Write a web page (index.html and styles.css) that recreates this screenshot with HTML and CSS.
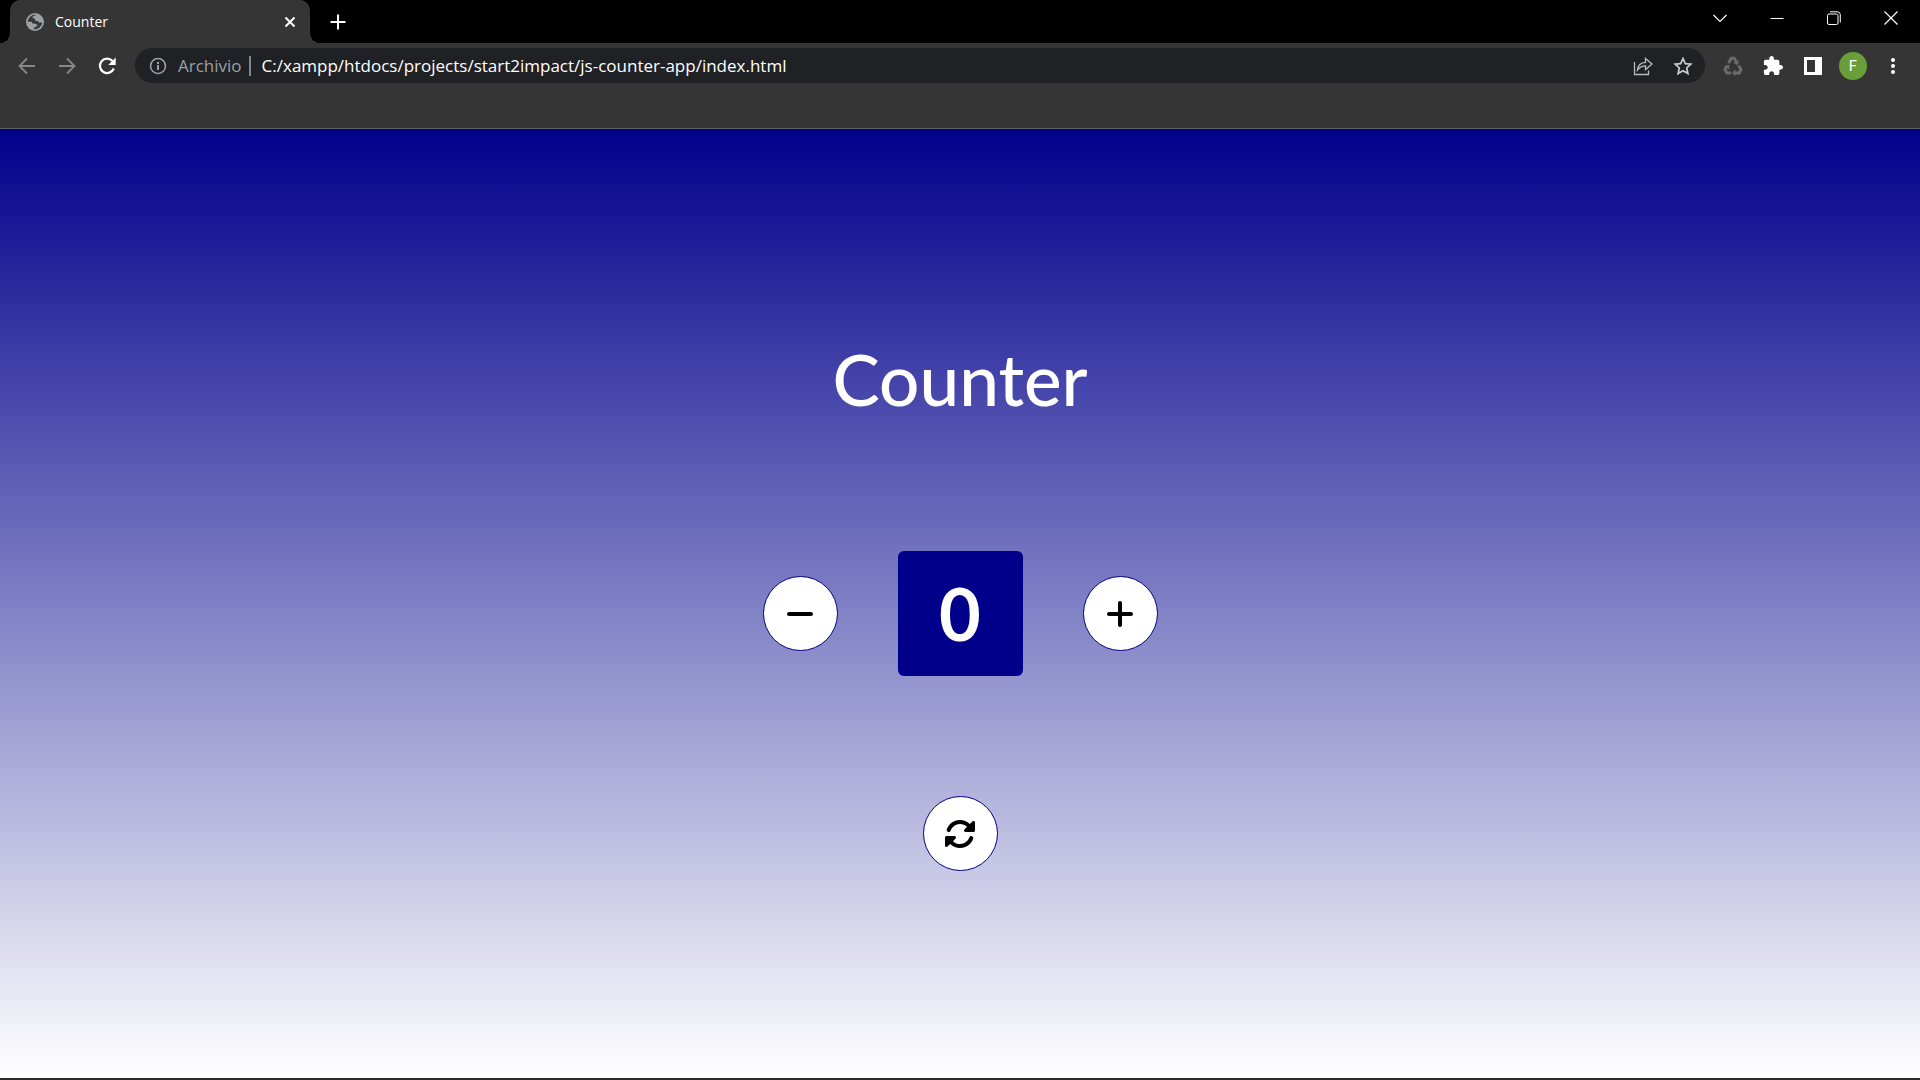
FILE: index.html
```html
<!DOCTYPE html>
<html lang="it">
<head>
<meta charset="utf-8">
<meta name="viewport" content="width=device-width, initial-scale=1">
<title>Counter</title>
<link rel="stylesheet" href="styles.css">
</head>
<body>
<header class="browser">
  <div class="tab-strip">
    <div class="tab">
      <svg class="icon-18" viewBox="0 0 18 18" aria-hidden="true"><circle cx="9" cy="9" r="9" fill="#9aa0a6"/><path d="M11 2C8.500 2.200 6 3.300 6.600 5.200L9 5.600 9.200 7.800 12.300 8.200 13 9.800 16.200 9.500A7.300 7.300 0 0 1 8 16.200L8.500 14 10.800 13.500 11.500 12 9.500 10.700 6.500 10.500 5.800 8.800 1.800 8.800A7.300 7.300 0 0 1 11 2Z" fill="#35363a"/></svg>
      <span class="tab-title">Counter</span>
      <button class="tab-close" aria-label="Chiudi scheda"><svg class="icon-12" viewBox="0 0 12 12" aria-hidden="true"><path d="M1.500 1.500 10.500 10.500M10.500 1.500 1.500 10.500" stroke="#fff" stroke-width="2"/></svg></button>
    </div>
    <button class="new-tab" aria-label="Nuova scheda"><svg class="icon-16" viewBox="0 0 16 16" aria-hidden="true"><path d="M8 .5V15.500M.5 8H15.500" stroke="#fff" stroke-width="2"/></svg></button>
    <div class="window-controls">
      <button class="window-button" aria-label="Cerca schede"><svg class="icon-14" viewBox="0 0 14 14" aria-hidden="true"><path d="M.5 4 7 10.500 13.500 4" fill="none" stroke="#fff" stroke-width="1.200"/></svg></button>
      <button class="window-button" aria-label="Riduci a icona"><svg class="icon-14" viewBox="0 0 14 14" aria-hidden="true"><path d="M.5 7.500H13.500" stroke="#fff"/></svg></button>
      <button class="window-button" aria-label="Ripristina"><svg class="icon-14" viewBox="0 0 14 14" aria-hidden="true"><rect x=".5" y="3" width="10.500" height="10.500" rx="1.500" fill="none" stroke="#fff"/><path d="M3 .8H10.500A3 3 0 0 1 13.300 3.600V11.500" fill="none" stroke="#fff"/></svg></button>
      <button class="window-button" aria-label="Chiudi"><svg class="icon-14" viewBox="0 0 14 14" aria-hidden="true"><path d="M.5 .5 13.500 13.500M13.500 .5 .5 13.500" stroke="#fff" stroke-width="1.200"/></svg></button>
    </div>
  </div>
  <div class="toolbar">
    <div class="tools">
      <button class="tool" aria-label="Indietro"><svg class="icon-18" viewBox="0 0 18 18" aria-hidden="true"><path d="M17 9H2M9 1.500 1.500 9 9 16.500" fill="none" stroke="#888" stroke-width="1.800"/></svg></button>
      <button class="tool" aria-label="Avanti"><svg class="icon-18" viewBox="0 0 18 18" aria-hidden="true"><path d="M1 9H16M9 1.500 16.500 9 9 16.500" fill="none" stroke="#888" stroke-width="1.800"/></svg></button>
      <button class="tool" aria-label="Ricarica"><svg class="icon-18" viewBox="0 0 18 18" aria-hidden="true"><path d="M15.800 11.500A7.200 7.200 0 1 1 14.500 4" fill="none" stroke="#fff" stroke-width="2.200"/><path d="M17.700 .5V8H10.200Z" fill="#fff"/></svg></button>
    </div>
    <form class="omnibox">
      <svg class="icon-18" viewBox="0 0 18 18" aria-hidden="true"><circle cx="9" cy="9" r="7.500" fill="none" stroke="#9aa0a6" stroke-width="1.600"/><path d="M9 8V13M9 5V7" stroke="#9aa0a6" stroke-width="2"/></svg>
      <label class="scheme" for="address">Archivio</label>
      <input class="address" id="address" type="text" spellcheck="false" value="C:/xampp/htdocs/projects/start2impact/js-counter-app/index.html">
      <button class="tool" type="button" aria-label="Condividi"><svg class="icon-20" viewBox="0 0 20 20" aria-hidden="true"><path d="M1.500 6V18.500H15.500V14.500M4.500 14C5 8.500 8 6.500 12.500 6.300V2.500L19 8 12.500 13.500V9.900C9 9.900 7 10.800 4.500 14Z" fill="none" stroke="#bbb" stroke-width="1.300"/></svg></button>
      <button class="tool" type="button" aria-label="Aggiungi ai preferiti"><svg class="icon-20" viewBox="0 0 20 20" aria-hidden="true"><path d="M10 2.500 12.300 7.600 17.800 8.200 13.700 12 14.900 17.500 10 14.700 5.100 17.500 6.300 12 2.200 8.200 7.700 7.600Z" fill="none" stroke="#ccc" stroke-width="1.700"/></svg></button>
    </form>
    <div class="tools">
      <button class="tool" aria-label="Estensione"><svg class="icon-20" viewBox="0 0 20 20" aria-hidden="true"><g fill="none" stroke="#6b6b6b" stroke-width="3"><path d="M5.500 7 8.300 2.300H11.200L13.800 6.500"/><path d="M15.700 9.500 18 13.500 16.200 17H11.500"/><path d="M8 17H3.800L2 13.500 4 10"/></g><path d="M15.800 4 15 9.200 10.500 7.300ZM12.500 13.200V20L8.800 17ZM1 10.500 6.200 8.500 6.500 13.500Z" fill="#6b6b6b"/></svg></button>
      <button class="tool" aria-label="Estensioni"><svg class="icon-20" viewBox="1 1 22 22" aria-hidden="true"><path fill="#fff" d="M20.500 11H19V7c0-1.100-.9-2-2-2h-4V3.500C13 2.120 11.880 1 10.500 1S8 2.120 8 3.500V5H4c-1.100 0-1.990.9-1.990 2v3.800H3.500c1.490 0 2.700 1.210 2.700 2.700s-1.210 2.700-2.700 2.700H2V20c0 1.100.9 2 2 2h3.800v-1.500c0-1.490 1.210-2.700 2.700-2.700 1.490 0 2.700 1.210 2.700 2.700V22H17c1.100 0 2-.9 2-2v-4h1.500c1.380 0 2.500-1.120 2.500-2.500S21.880 11 20.500 11z"/></svg></button>
      <button class="tool" aria-label="Riquadro laterale"><svg class="icon-18" viewBox="0 0 18 18" aria-hidden="true"><path fill="#fff" fill-rule="evenodd" d="M0 0H18V18H0ZM3 3H11V15H3Z"/></svg></button>
      <button class="tool" aria-label="Profilo"><span class="avatar">F</span></button>
      <button class="tool" aria-label="Menu"><svg class="icon-18" viewBox="0 0 18 18" aria-hidden="true"><g fill="#fff"><circle cx="9" cy="3" r="2"/><circle cx="9" cy="9" r="2"/><circle cx="9" cy="15" r="2"/></g></svg></button>
    </div>
  </div>
</header>
<main class="page">
  <h1 class="title">Counter</h1>
  <div class="counter">
    <button class="round-button" aria-label="Diminuisci"><svg class="icon-32" viewBox="-32 0 512 512" aria-hidden="true"><path d="M432 256c0 17.700-14.300 32-32 32L48 288c-17.700 0-32-14.300-32-32s14.300-32 32-32l352 0c17.700 0 32 14.300 32 32z"/></svg></button>
    <output class="value">0</output>
    <button class="round-button" aria-label="Aumenta"><svg class="icon-32" viewBox="-32 0 512 512" aria-hidden="true"><path d="M256 80c0-17.700-14.300-32-32-32s-32 14.300-32 32V224H48c-17.700 0-32 14.300-32 32s14.300 32 32 32H192V432c0 17.700 14.300 32 32 32s32-14.300 32-32V288H400c17.700 0 32-14.300 32-32s-14.300-32-32-32H256V80z"/></svg></button>
  </div>
  <button class="round-button" aria-label="Azzera"><svg class="icon-32" viewBox="0 0 512 512" aria-hidden="true"><path d="M142.900 142.900c62.200-62.200 162.700-62.500 225.300-1L327 183c-6.900 6.900-8.900 17.200-5.200 26.200s12.500 14.800 22.200 14.800H472c13.300 0 24-10.700 24-24V72c0-9.700-5.800-18.500-14.800-22.200s-19.300-1.700-26.200 5L413.400 96.600c-87.600-86.500-228.700-86.200-315.800 1C73.200 122 55.600 150.700 44.800 181.400c-5.900 16.700 2.900 34.900 19.500 40.800s34.900-2.900 40.800-19.500c7.700-21.800 20.200-42.300 37.800-59.800zM16 312V440c0 9.700 5.800 18.500 14.800 22.200s19.300 1.700 26.200-5l41.600-41.600c87.600 86.500 228.700 86.200 315.800-1c24.400-24.400 42.100-53.100 52.900-83.700c5.900-16.700-2.900-34.900-19.500-40.800s-34.900 2.900-40.800 19.500c-7.700 21.800-20.200 42.300-37.800 59.800c-62.200 62.200-162.700 62.500-225.300 1L185 329c6.900-6.900 8.900-17.200 5.200-26.200s-12.500-14.800-22.200-14.800H40c-13.300 0-24 10.700-24 24z"/></svg></button>
</main>
</body>
</html>
```
FILE: styles.css
```css
* {
  box-sizing: border-box;
}

body {
  margin: 0;
  min-height: 100vh;
  display: flex;
  flex-direction: column;
  border-bottom: 2px solid #292a2d;
  font-family: "Open Sans", "Noto Sans", sans-serif;
}

button {
  display: flex;
  align-items: center;
  justify-content: center;
  padding: 0;
  border: 0;
  background: none;
  font: inherit;
}

svg {
  display: block;
  flex: none;
}

.icon-12 { width: 12px; height: 12px; }
.icon-14 { width: 14px; height: 14px; }
.icon-16 { width: 16px; height: 16px; }
.icon-18 { width: 18px; height: 18px; }
.icon-20 { width: 20px; height: 20px; }
.icon-32 { width: 32px; height: 32px; }

/* Browser frame */
.browser {
  background: #353535;
  border-bottom: 1px solid #5f6060;
}

.tab-strip {
  display: flex;
  height: 43px;
  padding: 0 1px 0 10px;
  background: #000;
}

.tab {
  position: relative;
  display: flex;
  align-items: center;
  width: 300px;
  padding: 0 14px 0 16px;
  border-radius: 10px 10px 0 0;
  background: #353535;
}

.tab::before,
.tab::after {
  content: "";
  position: absolute;
  bottom: 0;
  width: 10px;
  height: 10px;
}

.tab::before {
  right: 100%;
  background: radial-gradient(circle at 0 0, transparent 10px, #353535 10px);
}

.tab::after {
  left: 100%;
  background: radial-gradient(circle at 100% 0, transparent 10px, #353535 10px);
}

.tab-title {
  flex: 1;
  margin-left: 11px;
  color: #fff;
  font-size: 14px;
  line-height: 20px;
}

.tab-close {
  width: 12px;
}

.new-tab {
  width: 56px;
}

.window-controls {
  display: flex;
  margin-left: auto;
  height: 36px;
}

.window-button {
  width: 57px;
}

.toolbar {
  display: flex;
  align-items: center;
  gap: 8px;
  padding: 5px 7px 45px;
}

.tools {
  display: flex;
}

.tool {
  width: 40px;
  height: 35px;
}

.omnibox {
  flex: 1;
  display: flex;
  align-items: center;
  padding: 0 2px 0 14px;
  border-radius: 18px;
  background: #202124;
  font-size: 17px;
  line-height: 20px;
}

.scheme {
  margin-left: 11px;
  padding-right: 7px;
  border-right: 2px solid #80868b;
  color: #9aa0a6;
}

.address {
  flex: 1;
  min-width: 0;
  padding: 0 0 0 11px;
  border: 0;
  outline: 0;
  background: none;
  color: #fff;
  font: inherit;
}

.avatar {
  width: 28px;
  height: 28px;
  border-radius: 50%;
  background: #689f38;
  color: #fff;
  font-family: Roboto, sans-serif;
  font-size: 15px;
  line-height: 28px;
}

/* Counter */
.page {
  flex: 1;
  display: flex;
  flex-direction: column;
  align-items: center;
  justify-content: center;
  background: linear-gradient(#00008b, #fff);
  font-family: Lato, sans-serif;
}

.title {
  margin: 0 0 129px;
  color: #fff;
  font-size: 71px;
  font-weight: 500;
  line-height: 86px;
}

.counter {
  display: flex;
  align-items: center;
  gap: 60px;
  margin-bottom: 120px;
}

.value {
  width: 125px;
  height: 125px;
  border-radius: 6px;
  background: #00008b;
  color: #fff;
  font-size: 72px;
  font-weight: 700;
  line-height: 125px;
  text-align: center;
}

.round-button {
  width: 75px;
  height: 75px;
  border: 1px solid #00008b;
  border-radius: 50%;
  background: #fff;
}
```
